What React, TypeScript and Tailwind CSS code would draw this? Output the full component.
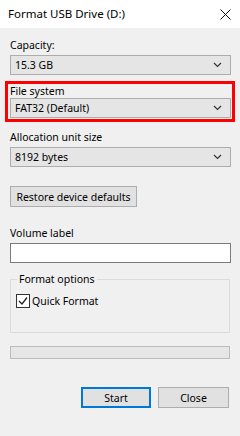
import React from 'react';

function Chevron() {
  return (
    <svg width="9" height="6" viewBox="0 0 9 6" fill="none" stroke="#333" strokeWidth="1.2">
      <polyline points="1 1 4.5 4.5 8 1" />
    </svg>
  );
}

function Combo({ value }: { value: string }) {
  return (
    <div className="flex h-[20px] w-[221px] items-center justify-between border border-[#adadad] bg-[#e5e5e5] pl-[4px] pr-[8px]">
      <span>{value}</span>
      <Chevron />
    </div>
  );
}

export default function App() {
  return (
    <div className="flex h-[436px] w-[240px] flex-col bg-[#f0f0f0] font-['Noto_Sans',sans-serif] text-[10.5px] leading-[14px] text-black">
      <div className="flex h-[28px] items-center justify-between bg-white pl-[8px] pr-[9px]">
        <span className="text-[11.5px]">Format USB Drive (D:)</span>
        <svg width="11" height="11" viewBox="0 0 11 11" stroke="#111" strokeWidth="1">
          <line x1="0.5" y1="0.5" x2="10.5" y2="10.5" />
          <line x1="10.5" y1="0.5" x2="0.5" y2="10.5" />
        </svg>
      </div>

      <div className="flex flex-col px-[10px]">
        <div className="mt-[10px]">Capacity:</div>
        <div className="mt-[3px]">
          <Combo value="15.3 GB" />
        </div>

        <div className="-mx-[5px] mt-[6px] flex w-[230px] flex-col border-[3px] border-[#ff0000] pb-[1px] pl-[2px]">
          <div>File system</div>
          <div>
            <Combo value="FAT32 (Default)" />
          </div>
        </div>

        <div className="mt-[8px]">Allocation unit size</div>
        <div className="mt-[3px]">
          <Combo value="8192 bytes" />
        </div>

        <div className="mt-[19px]">
          <div className="flex h-[21px] w-[127px] items-center justify-center border border-[#adadad] bg-[#e1e1e1]">
            Restore device defaults
          </div>
        </div>

        <div className="mt-[19px]">Volume label</div>
        <div className="mt-[3px] h-[20px] w-[221px] border border-[#7a7a7a] bg-white" />

        <div className="relative mt-[16px] h-[54px] w-[220px] border border-[#dcdcdc]">
          <span className="absolute -top-[8px] left-[6px] bg-[#f0f0f0] px-[2px]">Format options</span>
          <div className="mt-[14px] ml-[5px] flex items-center gap-[2px]">
            <svg width="14" height="14" viewBox="0 0 14 14">
              <rect x="0.5" y="0.5" width="13" height="13" fill="white" stroke="#333" />
              <polyline points="3 7 6 10 11 3.5" fill="none" stroke="#222" strokeWidth="1.3" />
            </svg>
            <span>Quick Format</span>
          </div>
        </div>

        <div className="mt-[13px] h-[13px] w-[220px] border border-[#bcbcbc] bg-[#e6e6e6]" />

        <div className="mt-[28px] flex justify-end gap-[7px] pr-[1px]">
          <div className="flex h-[21px] w-[70px] items-center justify-center border-2 border-[#0078d7] bg-[#e1e1e1]">
            Start
          </div>
          <div className="flex h-[21px] w-[71px] items-center justify-center border border-[#adadad] bg-[#e1e1e1]">
            Close
          </div>
        </div>
      </div>
    </div>
  );
}
